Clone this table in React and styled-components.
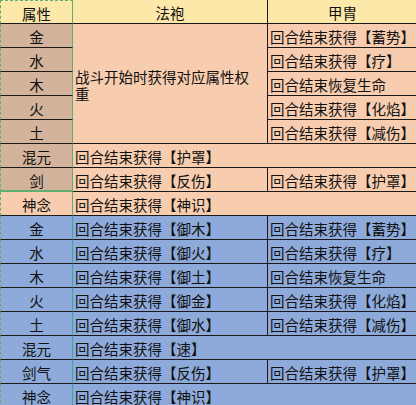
import React from 'react'
import styled, { createGlobalStyle } from 'styled-components'

const GlobalStyle = createGlobalStyle`
  html, body {
    margin: 0;
    padding: 0;
    background: #ffffff;
    overflow: hidden;
  }
  body {
    font-family: "Noto Sans CJK SC", "Noto Sans", sans-serif;
  }
`

const colors = {
  header: '#fce8a8',
  brown: '#d3b39b',
  peach: '#f8ccae',
  blue: '#8eaadb',
  green: '#5fb070',
  teal: '#3fa59f',
}

const Sheet = styled.div`
  display: grid;
  grid-template-columns: 73px 195px 150px;
  grid-auto-rows: 24px;
  width: 418px;
  font-size: 14.5px;
  color: #111;
`

const Cell = styled.div`
  box-sizing: border-box;
  display: flex;
  align-items: center;
  justify-content: ${p => (p.$center ? 'center' : 'flex-start')};
  padding: 2px 0 0 ${p => (p.$center ? '0' : '2px')};
  background: ${p => p.$bg};
  border-right: 1px solid #1a1a1a;
  border-bottom: 1px solid #1a1a1a;
  white-space: nowrap;
  overflow: hidden;
  line-height: 17px;
  grid-column: ${p => (p.$span ? `span ${p.$span}` : 'auto')};
  grid-row: ${p => (p.$rows ? `span ${p.$rows}` : 'auto')};
`

const KeyCell = styled(Cell)`
  justify-content: center;
  padding: 2px 0 0 0;
  border-left: 1px dashed ${colors.green};
  border-right: 1px solid ${p => p.$edge};
  border-top: ${p => (p.$top ? `1px dashed ${colors.green}` : 'none')};
  border-bottom: ${p => (p.$mark ? `2px solid ${colors.green}` : '1px solid #1a1a1a')};
`

const WrapCell = styled(Cell)`
  white-space: normal;
  padding: 3px 4px 0 2px;
`

const gain = s => `回合结束获得【${s}】`
const heal = '回合结束恢复生命'

const upper = [
  { key: '金', armor: gain('蓄势') },
  { key: '水', armor: gain('疗') },
  { key: '木', armor: heal },
  { key: '火', armor: gain('化焰') },
  { key: '土', armor: gain('减伤') },
]

const lower = [
  { key: '金', robe: gain('御木'), armor: gain('蓄势') },
  { key: '水', robe: gain('御火'), armor: gain('疗') },
  { key: '木', robe: gain('御土'), armor: heal },
  { key: '火', robe: gain('御金'), armor: gain('化焰') },
  { key: '土', robe: gain('御水'), armor: gain('减伤') },
  { key: '混元', robe: gain('速') },
  { key: '剑气', robe: gain('反伤'), armor: gain('护罩') },
  { key: '神念', robe: gain('神识') },
]

export default function App() {
  return (
    <>
      <GlobalStyle />
      <Sheet>
        <KeyCell $bg={colors.header} $edge={colors.green} $top>属性</KeyCell>
        <Cell $bg={colors.header} $center>法袍</Cell>
        <Cell $bg={colors.header} $center>甲胄</Cell>

        {upper.map((r, i) => (
          <React.Fragment key={'u' + i}>
            <KeyCell $bg={colors.brown} $edge={colors.green}>{r.key}</KeyCell>
            {i === 0 && (
              <WrapCell $bg={colors.peach} $rows={5}>战斗开始时获得对应属性权重</WrapCell>
            )}
            <Cell $bg={colors.peach}>{r.armor}</Cell>
          </React.Fragment>
        ))}

        <KeyCell $bg={colors.brown} $edge={colors.green}>混元</KeyCell>
        <Cell $bg={colors.peach} $span={2}>{gain('护罩')}</Cell>

        <KeyCell $bg={colors.brown} $edge={colors.green} $mark>剑</KeyCell>
        <Cell $bg={colors.peach}>{gain('反伤')}</Cell>
        <Cell $bg={colors.peach}>{gain('护罩')}</Cell>

        <KeyCell $bg={colors.peach} $edge={colors.green}>神念</KeyCell>
        <Cell $bg={colors.peach} $span={2}>{gain('神识')}</Cell>

        {lower.map((r, i) => (
          <React.Fragment key={'l' + i}>
            <KeyCell $bg={colors.blue} $edge={colors.teal}>{r.key}</KeyCell>
            {r.armor ? (
              <>
                <Cell $bg={colors.blue}>{r.robe}</Cell>
                <Cell $bg={colors.blue}>{r.armor}</Cell>
              </>
            ) : (
              <Cell $bg={colors.blue} $span={2}>{r.robe}</Cell>
            )}
          </React.Fragment>
        ))}
      </Sheet>
    </>
  )
}
